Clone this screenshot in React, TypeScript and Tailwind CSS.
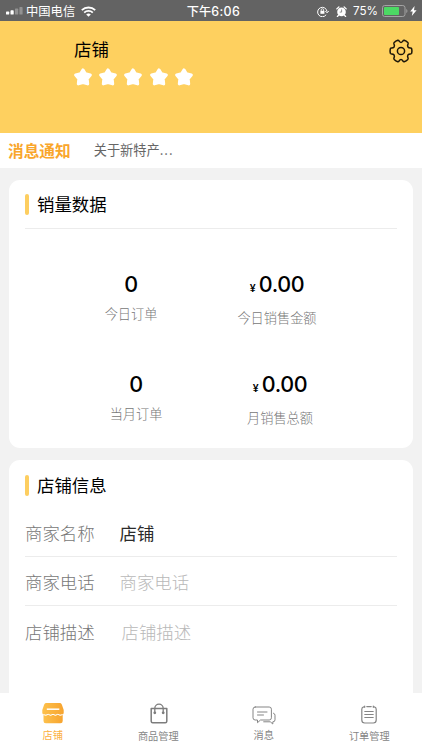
import type { ReactNode } from "react"

const STARS = [1, 2, 3, 4, 5]

const StatusBar = () => {
    return (
        <div className="grid h-[21px] grid-cols-[1fr_auto_1fr] items-center bg-[#636363] text-white">
            <div className="flex items-center pl-[6px]">
                <svg className="h-[8px] w-[17px]" viewBox="0 0 17 8">
                    <rect x="0" y="4.6" width="3.2" height="3" rx=".7" fill="#fff" />
                    <rect x="4.5" y="3.2" width="3.2" height="4.4" rx=".7" fill="#fff" />
                    <rect x="9" y="1.6" width="3.2" height="6" rx=".7" fill="#929292" />
                    <rect x="13.4" y="0" width="3.2" height="7.6" rx=".7" fill="#929292" />
                </svg>
                <span className="ml-[3px] text-[12.3px] leading-[20px]">中国电信</span>
                <svg className="ml-[6px] h-[11px] w-[15px]" viewBox="0 0 15 11" fill="none" stroke="#fff" strokeWidth="1.8">
                    <path d="M.8 4.2a9.6 9.6 0 0 1 13.4 0" />
                    <path d="M3.2 6.7a6.2 6.2 0 0 1 8.6 0" />
                    <path d="M7.5 10.7 5.2 8.5a3.4 3.4 0 0 1 4.6 0z" fill="#fff" stroke="none" />
                </svg>
            </div>
            <span className="pl-[5px] pt-px text-[12.2px] font-medium leading-[20px]">下午<span className="font-['Inter'] text-[12.4px] tracking-[.4px]">6:06</span></span>
            <div className="flex items-center justify-end pr-[5px]">
                <svg className="h-[11px] w-[12px]" viewBox="0 0 12 11" fill="none" stroke="#fff" strokeWidth="1">
                    <path d="M9.2 8.7A4.7 4.7 0 1 1 10 5.5M8.3 5l1.8 1.8L11.7 5" />
                    <rect x="3.4" y="4.8" width="4" height="3" fill="#fff" stroke="none" />
                    <path d="M4.2 5V3.9a1.2 1.2 0 0 1 2.4 0V5" strokeWidth=".8" />
                </svg>
                <svg className="ml-[7px] h-[11px] w-[11px]" viewBox="0 0 11 11">
                    <circle cx="5.5" cy="5.9" r="4.3" fill="#fff" />
                    <path d="M.8 2.9 2.9.9M10.2 2.9 8.1.9M2.4 9.3l-1 1.2M8.6 9.3l1 1.2" stroke="#fff" strokeWidth="1.3" strokeLinecap="round" />
                    <path d="M5.6 3.4v2.7H3.7" fill="none" stroke="#636363" strokeWidth=".7" />
                </svg>
                <span className="ml-[6px] font-['Inter'] text-[11.7px] leading-[20px]">75%</span>
                <svg className="ml-[4px] h-[12px] w-[26px]" viewBox="0 0 26 12">
                    <rect x=".5" y=".5" width="22.5" height="11" rx="2.2" fill="none" stroke="#a4a4a4" />
                    <rect x="2" y="2" width="15" height="8" rx=".8" fill="#4cd964" />
                    <path d="M24.3 4v4c1.5-.6 1.5-3.4 0-4z" fill="#a4a4a4" />
                </svg>
                <svg className="ml-[2px] h-[10px] w-[7px]" viewBox="0 0 7 10" fill="#fff">
                    <path d="M4.6 0 .2 5.6h2.5L1.8 10l4.8-5.8H4z" />
                </svg>
            </div>
        </div>
    )
}

const Star = () => (
    <svg className="h-[18px] w-[18px]" viewBox="0 0 18 18" fill="#fff" stroke="#fff" strokeWidth="3" strokeLinejoin="round">
        <path d="M9 1.9 11.4 5.7 16.3 7 13.2 10.9 13.7 15.9 9 14.6 4.3 15.9 4.8 10.9 1.7 7 6.6 5.7z" />
    </svg>
)

const Gear = () => (
    <svg className="h-[24px] w-[24px]" viewBox="0 0 24 24" fill="none" stroke="#1c1609" strokeWidth="1.5" strokeLinejoin="round">
        <path d="M22.7 9.8Q23.2 12 22.7 14.2 22.4 14.9 21.4 14.9 19.7 14.9 18.9 16 18.2 17.300 19 18.900 19.400 19.900 18.800 20.500 17.300 22 15.200 22.700 14.400 22.800 13.900 22 13.100 20.600 12 20.600 10.900 20.600 10.100 22 9.600 22.800 8.800 22.700 6.700 22 5.200 20.500 4.600 19.900 5 18.900 5.800 17.300 5.100 16 4.300 14.900 2.600 14.900 1.600 14.900 1.300 14.200 .8 12 1.300 9.800 1.600 9.100 2.600 9.100 4.300 9.100 5.100 8 5.800 6.700 5 5.100 4.600 4.100 5.200 3.500 6.700 2 8.800 1.300 9.600 1.200 10.100 2 10.900 3.400 12 3.400 13.100 3.400 13.900 2 14.400 1.200 15.200 1.300 17.300 2 18.800 3.500 19.400 4.100 19 5.100 18.200 6.700 18.900 8 19.700 9.100 21.400 9.100 22.400 9.100 22.700 9.800z" />
        <circle cx="12" cy="12" r="3.6" />
    </svg>
)

const CardTitle = ({ children }: { children: ReactNode }) => (
    <div className="flex items-center">
        <div className="h-[21px] w-[4px] rounded-sm bg-[#fdce60]" />
        <h2 className="ml-[8px] text-[17.4px] leading-[24px] text-black">{children}</h2>
    </div>
)

const Stat = ({ value, label, money }: { value: string, label: string, money?: boolean }) => (
    <div className="flex flex-col items-center">
        <div className="flex h-[28px] items-baseline whitespace-nowrap font-['Inter'] font-medium leading-[28px] text-black">
            {money && <span className="mr-[3px] text-[10.5px] font-semibold">¥</span>}
            <span className="text-[21.5px] tracking-[-.4px]">{value}</span>
        </div>
        <span className={money ? "mt-[10px] whitespace-nowrap text-[13.2px] font-light leading-[20px] text-[#777]" : "mt-[6px] whitespace-nowrap text-[13.2px] font-light leading-[20px] text-[#777]"}>{label}</span>
    </div>
)

const Tab = ({ icon, label, active, low }: { icon: ReactNode, label: string, active?: boolean, low?: boolean }) => (
    <div className={active ? "flex flex-col items-center text-[#fbb03f]" : "flex flex-col items-center text-[#858585]"}>
        <div className="flex h-[24px] items-center">{icon}</div>
        <span className={low ? "mt-[4px] text-[10.2px] leading-[14px]" : "mt-[3px] text-[10.2px] leading-[14px]"}>{label}</span>
    </div>
)

export default function App() {
    return (
        <div className="flex h-[750px] w-[422px] flex-col overflow-hidden bg-[#f2f2f2] font-['Noto_Sans_CJK_SC',sans-serif]">
            <StatusBar />

            <header className="flex h-[112px] items-start justify-between bg-[#fed05f] pl-[74px] pr-[9px]">
                <div className="pt-[15px]">
                    <h1 className="text-[17.4px] leading-[25px] text-black">店铺</h1>
                    <div className="mt-[7px] flex gap-[7.2px]">
                        {STARS.map((s) => <Star key={s} />)}
                    </div>
                </div>
                <div className="pt-[18px]">
                    <Gear />
                </div>
            </header>

            <div className="flex h-[35px] items-center bg-white pb-[2px] pl-[8px]">
                <span className="pt-[2px] text-[15.7px] font-bold leading-[24px] text-[#f9a62b]">消息通知</span>
                <span className="ml-[23px] text-[13.2px] leading-[22px] text-[#666]">关于新特产<span className="tracking-[1px]">...</span></span>
            </div>

            <section className="mx-[9px] mt-[12px] h-[268px] rounded-[11px] bg-white px-[16px] pt-[12px]">
                <CardTitle>销量数据</CardTitle>
                <div className="mt-[12px] border-t border-[#ececec]" />
                <div className="flex pl-[79px] pt-[41px]">
                    <div className="w-[54px]"><Stat value="0" label="今日订单" /></div>
                    <div className="ml-[79px] w-[80px]"><Stat value="0.00" label="今日销售金额" money /></div>
                </div>
                <div className="flex pl-[84px] pt-[42px]">
                    <div className="w-[54px]"><Stat value="0" label="当月订单" /></div>
                    <div className="ml-[77px] w-[80px]"><Stat value="0.00" label="月销售总额" money /></div>
                </div>
            </section>

            <section className="mx-[9px] mt-[12px] h-[233px] rounded-t-[11px] bg-white px-[16px] pt-[13px]">
                <CardTitle>店铺信息</CardTitle>
                <div className="mt-[12px] flex h-[48px] items-center border-b border-[#ececec] pt-[2px] text-[17.4px]">
                    <span className="font-light text-[#777]">商家名称</span>
                    <span className="ml-[25px] text-[#2b2b2b]">店铺</span>
                </div>
                <div className="flex h-[49px] items-center border-b border-[#ececec] pt-[2px] text-[17.4px] font-light">
                    <span className="text-[#777]">商家电话</span>
                    <span className="ml-[25px] text-[#b8b8b8]">商家电话</span>
                </div>
                <div className="flex h-[50px] items-center pt-[2px] text-[17.4px] font-light">
                    <span className="text-[#777]">店铺描述</span>
                    <span className="ml-[27px] text-[#b8b8b8]">店铺描述</span>
                </div>
            </section>

            <nav className="grid h-[57px] grid-cols-4 bg-white pt-[8px]">
                <Tab
                    active
                    label="店铺"
                    icon={
                        <svg className="h-[22px] w-[24px]" viewBox="0 0 24 22">
                            <defs>
                                <linearGradient id="shop" x1="0" x2="1">
                                    <stop offset="0" stopColor="#fdc14c" />
                                    <stop offset="1" stopColor="#f7a42f" />
                                </linearGradient>
                            </defs>
                            <path d="M5.5 1h13c1.2 0 2 .6 2.4 1.7L22.7 8v2.2a2.6 2.6 0 0 1-2.6 2.6H3.9a2.6 2.6 0 0 1-2.6-2.6V8l1.8-5.3C3.5 1.6 4.3 1 5.5 1z" fill="url(#shop)" />
                            <path d="M2.5 12.5q2.4 1.6 4.7-.3 2.4 2.2 4.8 0 2.4 2.2 4.8 0 2.3 1.9 4.9.3V19a2.3 2.3 0 0 1-2.3 2.3H4.8A2.3 2.3 0 0 1 2.5 19z" fill="url(#shop)" />
                            <path d="M2.3 12.6q2.6 1.6 4.9-.3 2.4 2.2 4.8 0 2.4 2.2 4.8 0 2.3 1.9 4.9.3" fill="none" stroke="#fff" strokeWidth="1" />
                            <path d="M5.8 7.2h12.5" stroke="#fff" strokeWidth="1.5" />
                        </svg>
                    }
                />
                <Tab
                    low
                    label="商品管理"
                    icon={
                        <svg className="ml-[2px] h-[21px] w-[18px]" viewBox="0 0 18 21" fill="none" stroke="#7d7d7d" strokeWidth="1.5">
                            <path d="M1.2 5.5h15.6v12.7a1.5 1.5 0 0 1-1.5 1.5H2.7a1.5 1.5 0 0 1-1.5-1.5z" strokeLinejoin="round" />
                            <path d="M4.8 9.8V5.4a4.2 4.2 0 0 1 8.4 0v4.4" strokeWidth="1.3" />
                            <circle cx="4.8" cy="9.8" r="1.4" fill="#7d7d7d" stroke="none" />
                            <circle cx="13.2" cy="9.8" r="1.4" fill="#7d7d7d" stroke="none" />
                        </svg>
                    }
                />
                <Tab
                    label="消息"
                    icon={
                        <svg className="mt-[4px] h-[19px] w-[24px]" viewBox="0 0 24 19" fill="none" stroke="#858585" strokeWidth="1" strokeLinecap="round" strokeLinejoin="round">
                            <path d="M3.2 1h14a2.2 2.2 0 0 1 2.2 2.2v8.6a2.2 2.2 0 0 1-2.2 2.2H8.5l-3 2.7V14H3.2A2.2 2.2 0 0 1 1 11.8V3.2A2.2 2.2 0 0 1 3.2 1z" />
                            <path d="M5.5 6h9.5M5.5 9h6" />
                            <path d="M21.5 7.2q1.5.5 1.5 2v4.6a2 2 0 0 1-2 2h-.2v2.2l-2.5-2.2h-6.6" />
                        </svg>
                    }
                />
                <Tab
                    low
                    label="订单管理"
                    icon={
                        <svg className="mt-[2px] h-[19px] w-[16px]" viewBox="0 0 16 19" fill="none" stroke="#858585" strokeWidth="1.2" strokeLinecap="round">
                            <path d="M2.8 1.9A2.3 2.3 0 0 0 .8 4.2v10.9a2.9 2.9 0 0 0 2.9 2.9h8.6a2.9 2.9 0 0 0 2.9-2.9V4.2A2.3 2.3 0 0 0 13.2 1.9M5.8 1.6h4.4M3.7 1v1.3M12.3 1v1.3" />
                            <path d="M3.8 6.5h8.4M3.8 9.5h8.4M3.8 12.5h8.4" />
                        </svg>
                    }
                />
            </nav>
        </div>
    )
}
